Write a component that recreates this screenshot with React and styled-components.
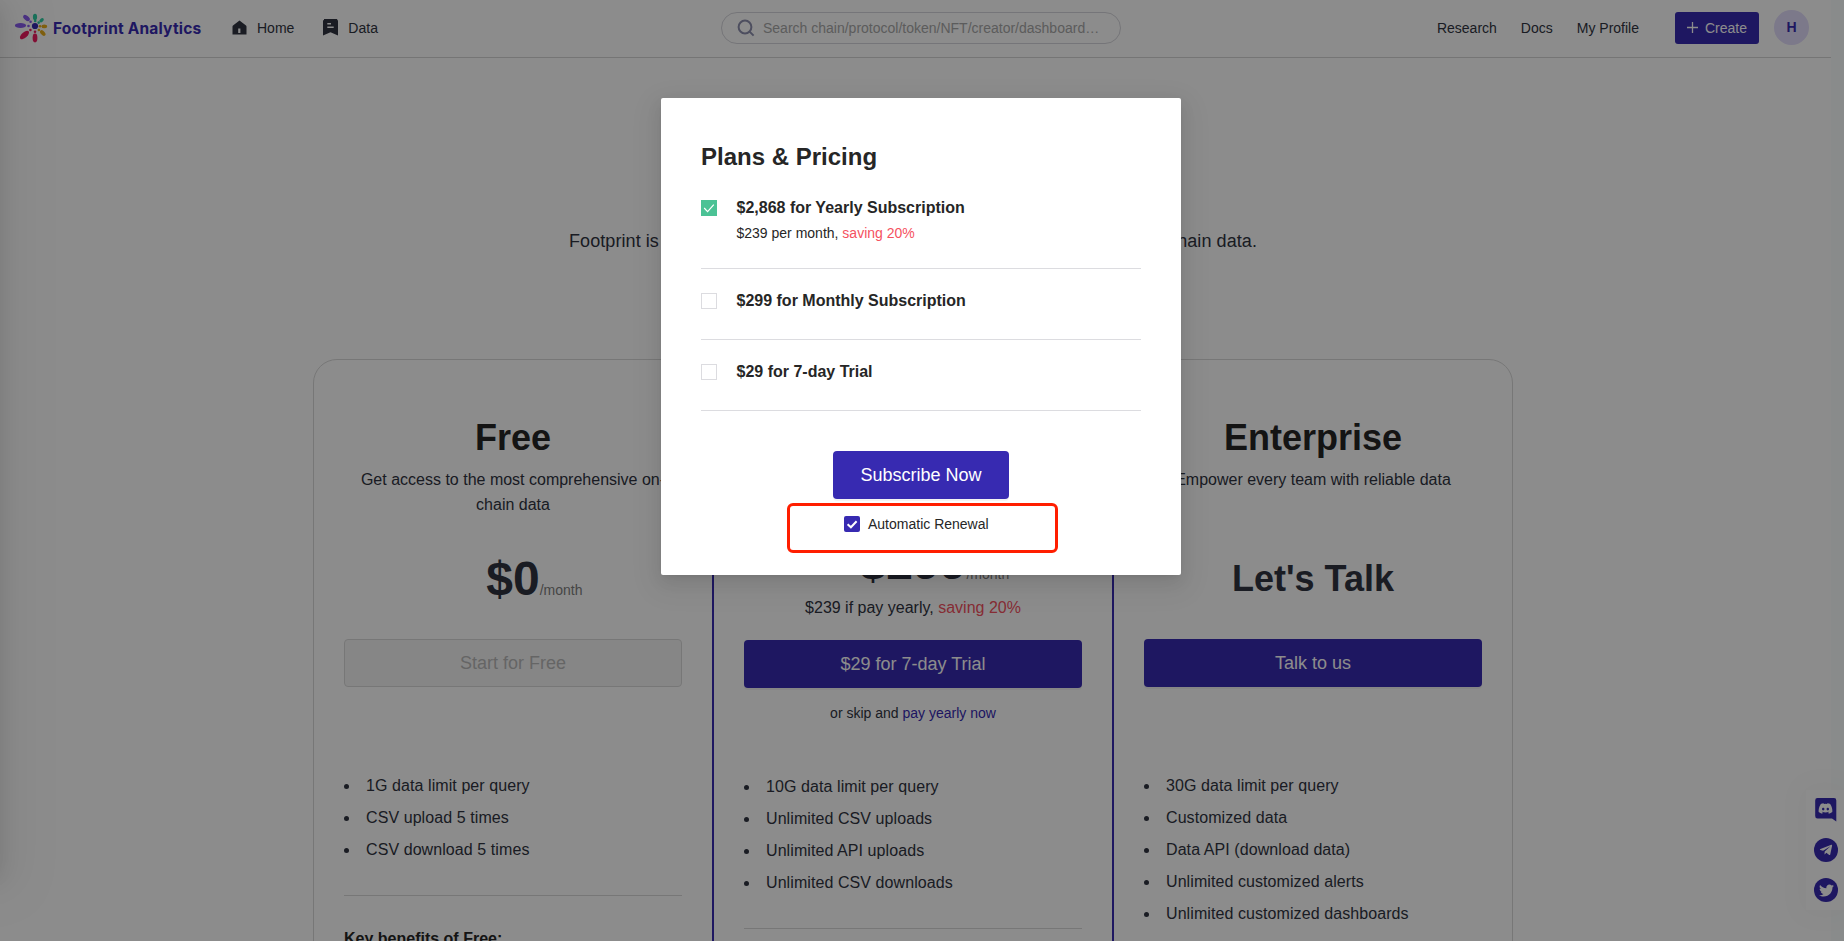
import React from "react";
import styled, { createGlobalStyle } from "styled-components";
import { FaDiscord, FaTwitter, FaTelegramPlane } from "react-icons/fa";

const PRIMARY = "#372ab1";
const INK = "#303441";

const GlobalStyle = createGlobalStyle`
  * { box-sizing: border-box; }
  body {
    margin: 0;
    background: #fff;
    color: ${INK};
    font-family: "Liberation Sans", Arial, sans-serif;
    font-size: 14px;
    overflow: hidden;
  }
  h1, h2, h3, p, ul { margin: 0; padding: 0; }
`;

const Window = styled.div`
  position: relative;
  display: flex;
  width: 1844px;
  height: 941px;
  overflow: hidden;
`;

const Page = styled.div`
  width: 1831px;
`;

const ScrollTrack = styled.div`
  flex: 1;
  background: #fafdfd;
`;

const Header = styled.header`
  display: flex;
  align-items: center;
  height: 58px;
  padding: 0 22px 2px 15px;
  border-bottom: 1px solid #d6d6d6;
`;

const Side = styled.div`
  display: flex;
  align-items: center;
  width: ${(p) => p.$width};
`;

const Brand = styled.div`
  display: flex;
  align-items: center;
  width: 217px;
  gap: 5px;
  color: ${PRIMARY};
`;

const BrandName = styled.span`
  font: 700 15.5px/20px "Inter", sans-serif;
  letter-spacing: 0.2px;
  white-space: nowrap;
  padding-top: 2px;
`;

const NavItem = styled.a`
  display: flex;
  align-items: center;
  gap: ${(p) => p.$gap || "0"};
  margin-right: ${(p) => p.$after || "24px"};
  white-space: nowrap;
`;

const SearchBox = styled.div`
  display: flex;
  align-items: center;
  gap: 8px;
  width: 400px;
  height: 32px;
  padding-left: 15px;
  border: 1px solid #d6d6dc;
  border-radius: 16px;
  color: #a8a8a8;
`;

const Spacer = styled.div`
  flex: 1;
`;

const CreateButton = styled.button`
  display: flex;
  align-items: center;
  justify-content: center;
  gap: 7px;
  width: 84px;
  height: 32px;
  padding: 0;
  margin-left: 12px;
  border: 0;
  border-radius: 3px;
  background: ${PRIMARY};
  color: #fff;
  font: inherit;
`;

const Avatar = styled.div`
  width: 35px;
  height: 35px;
  margin-left: 15px;
  border-radius: 50%;
  background: #e2dcfb;
  color: ${PRIMARY};
  font-weight: bold;
  line-height: 35px;
  text-align: center;
`;

const Main = styled.main`
  width: 1826px;
  padding-top: 169px;
`;

const Lead = styled.p`
  height: 132px;
  font-size: 18px;
  line-height: 28px;
  letter-spacing: 0.075px;
  text-align: center;
  white-space: nowrap;
`;

const Plans = styled.div`
  display: grid;
  grid-template-columns: 398px 402px 398px;
  width: 1200px;
  height: 700px;
  margin: 0 auto;
  border: 1px solid #d9d9d9;
  border-radius: 24px;
`;

const Plan = styled.section`
  padding: 56px 30px 0;
  height: 720px;
  margin-top: ${(p) => (p.$featured ? "-1px" : "0")};
  border: ${(p) => (p.$featured ? `2px solid ${PRIMARY}` : "0")};
`;

const PlanName = styled.h2`
  color: #262626;
  font-size: 36px;
  line-height: 44px;
  text-align: center;
`;

const PlanSummary = styled.p`
  height: 50px;
  margin-top: 7px;
  font-size: 16px;
  line-height: 25px;
  text-align: center;
`;

const PriceBlock = styled.div`
  height: 122px;
  padding-top: ${(p) => (p.$raised ? "14px" : "31px")};
  text-align: center;
`;

const Price = styled.div`
  height: 61px;
  font-size: ${(p) => p.$size};
  font-weight: bold;
  line-height: 61px;
`;

/* Takes no width of its own, so that the amount alone is centred. */
const Period = styled.span`
  display: inline-block;
  width: 0;
  color: #808080;
  font-size: 14px;
  font-weight: normal;
  white-space: nowrap;
`;

const YearlyNote = styled.p`
  margin-top: 3px;
  font-size: 16px;
  line-height: 24px;
`;

const Saving = styled.span`
  color: #f5515f;
`;

const Actions = styled.div`
  height: 131px;
  text-align: center;
`;

const BigButton = styled.button`
  display: block;
  width: ${(p) => p.$width || "100%"};
  height: 48px;
  border: ${(p) => (p.$muted ? "1px solid #d9d9d9" : "0")};
  border-radius: 4px;
  background: ${(p) => (p.$muted ? "#f5f5f5" : PRIMARY)};
  color: ${(p) => (p.$muted ? "#b9b9b9" : "#fff")};
  font: 18px "Liberation Sans", Arial, sans-serif;
  box-shadow: ${(p) => (p.$muted ? "none" : "0 2px 0 rgba(0, 0, 0, 0.045)")};
`;

const SkipLine = styled.p`
  margin-top: 14px;
  line-height: 22px;
`;

const Link = styled.a`
  color: ${PRIMARY};
`;

const Features = styled.ul`
  list-style: none;
`;

const Feature = styled.li`
  display: flex;
  align-items: center;
  gap: 17px;
  font-size: 16px;
  line-height: 32px;
  letter-spacing: 0.08px;

  &::before {
    content: "";
    width: 5px;
    height: 5px;
    border-radius: 50%;
    background: ${INK};
  }
`;

const Benefits = styled.h3`
  margin-top: 29px;
  padding-top: 31px;
  border-top: 1px solid #d9d9d9;
  color: #262626;
  font-size: 16px;
  line-height: 24px;
`;

const OffscreenDrawer = styled.div`
  position: absolute;
  left: -241px;
  top: 0;
  width: 240px;
  height: 884px;
  box-shadow: 6px 0 16px -8px rgba(0, 0, 0, 0.08), 9px 0 28px rgba(0, 0, 0, 0.05),
    12px 0 48px 16px rgba(0, 0, 0, 0.03);
`;

const Socials = styled.aside`
  position: absolute;
  right: 0;
  top: 790px;
  display: flex;
  flex-direction: column;
  align-items: center;
  justify-content: space-between;
  width: 38px;
  height: 120px;
  padding: 8px 0;
  padding-left: 2px;
  background: #fff;
  box-shadow: 0 0 28px 8px rgba(0, 0, 0, 0.025);
`;

const RoundIcon = styled.div`
  display: flex;
  align-items: center;
  justify-content: center;
  width: 24px;
  height: 24px;
  border-radius: 50%;
  background: ${PRIMARY};
  color: #fff;
`;

const ChatIcon = styled.div`
  position: relative;
  display: flex;
  width: 24px;
  height: 24px;
  color: #fff;

  & > svg:last-child {
    position: absolute;
    left: 4px;
    top: 3px;
  }
`;

const Mask = styled.div`
  position: absolute;
  inset: 0;
  display: flex;
  align-items: flex-start;
  padding: 98px 0 0 661px;
  background: rgba(0, 0, 0, 0.45);
`;

const Modal = styled.div`
  position: relative;
  width: 520px;
  height: 477px;
  padding: 43px 40px 0;
  border-radius: 2px;
  background: #fff;
  color: #262626;
  box-shadow: 0 3px 6px -4px rgba(0, 0, 0, 0.12), 0 6px 16px rgba(0, 0, 0, 0.08),
    0 9px 28px 8px rgba(0, 0, 0, 0.05);
`;

const ModalTitle = styled.h1`
  margin-bottom: 3px;
  font-size: 24px;
  line-height: 32px;
`;

const Option = styled.div`
  display: flex;
  gap: 19.5px;
  padding: 20px 0 ${(p) => (p.$detailed ? "24px" : "26px")};
  border-bottom: 1px solid #dcdce0;
`;

const OptionBox = styled.div`
  display: flex;
  width: 16px;
  height: 16px;
  margin-top: 4px;
  border: 1px solid ${(p) => (p.$checked ? "#4bc295" : "#dcdce0")};
  background: ${(p) => (p.$checked ? "#4bc295" : "#fff")};
`;

const OptionTitle = styled.h3`
  font-size: 16px;
  line-height: 24px;
`;

const OptionDetail = styled.p`
  padding-top: 2px;
  line-height: 22px;
`;

const Submit = styled.div`
  display: flex;
  justify-content: center;
  padding-top: 40px;
`;

const Renewal = styled.label`
  display: flex;
  align-items: center;
  gap: 8px;
  height: 22px;
  margin: 14px 0 0 143px;
`;

const RenewalBox = styled.span`
  display: flex;
  width: 16px;
  height: 16px;
  border-radius: 2px;
  background: ${PRIMARY};
`;

const Highlight = styled.div`
  position: absolute;
  left: 126px;
  top: 405px;
  width: 271px;
  height: 50px;
  border: 3px solid #ff1e00;
  border-radius: 6px;
`;

const PETALS = [
  [-14.5, -0.5, 5.6, 2.6, 0, "#8a5df0"],
  [-8.5, -8, 3.9, 2.2, 40, "#8a5df0"],
  [0, -9, 3.2, 2.1, 90, "#2fcfa4"],
  [6.6, -5.8, 2.5, 1.7, -40, "#2fcfa4"],
  [9.3, 0.4, 2.8, 1.9, 0, "#e8ae1c"],
  [7.8, 7, 3.4, 2, 48, "#e8ae1c"],
  [0, 12, 4.4, 2.4, 90, "#f01d62"],
  [-10.5, 9, 5.6, 2.8, -42, "#f01d62"],
];

const DOTS = [
  [-6.5, 0, "#8a5df0"],
  [-4.4, -4.2, "#8a5df0"],
  [0.2, -5, "#2fcfa4"],
  [3.7, -3.4, "#2fcfa4"],
  [5, 0.3, "#e8ae1c"],
  [3.9, 4, "#e8ae1c"],
  [0, 5.8, "#f01d62"],
  [-4.6, 4, "#f01d62"],
];

function Logo() {
  return (
    <svg width="33" height="30" viewBox="-20 -13 33 30">
      {PETALS.map(([x, y, rx, ry, a, c], i) => (
        <ellipse key={i} rx={rx} ry={ry} fill={c} transform={`translate(${x} ${y}) rotate(${a})`} />
      ))}
      {DOTS.map(([x, y, c], i) => (
        <circle key={i} cx={x} cy={y} r="1.3" fill={c} />
      ))}
      <circle r="3.1" fill={PRIMARY} />
    </svg>
  );
}

function HomeIcon() {
  return (
    <svg width="15" height="15" viewBox="0 0 15 15">
      <path
        fill={INK}
        fillRule="evenodd"
        d="M7.5 0.5 14 5.6Q14.5 6 14.5 6.7V14.5H.5V6.7Q.5 6 1 5.6ZM6.2 8.5V13H8.4V8.5Z"
      />
    </svg>
  );
}

function DataIcon() {
  return (
    <svg width="15" height="17" viewBox="0 0 15 17">
      <path
        fill={INK}
        fillRule="evenodd"
        d="M1 0H14.2V1.2H15V16.5L7.5 13.2 0 16.5V1.2H1ZM4.3 4V5.5H8V4ZM4.3 7.5V9H10.7V7.5Z"
      />
    </svg>
  );
}

function SearchIcon() {
  return (
    <svg width="18" height="18" viewBox="0 0 18 18" fill="none" stroke="#8d8fae" strokeWidth="2">
      <circle cx="8" cy="8" r="6.4" />
      <path d="M12.6 12.6 16.6 16.6" />
    </svg>
  );
}

function PlusIcon() {
  return (
    <svg width="11" height="11" viewBox="0 0 11 11" stroke="#fff" strokeWidth="1.3">
      <path d="M5.5 0V11M0 5.5H11" />
    </svg>
  );
}

function FeatureList({ items }) {
  return (
    <Features>
      {items.map((item) => (
        <Feature key={item}>{item}</Feature>
      ))}
    </Features>
  );
}

export default function App() {
  return (
    <Window>
      <GlobalStyle />
      <Page>
        <Header>
          <Side $width="706px">
            <Brand>
              <Logo />
              <BrandName>Footprint Analytics</BrandName>
            </Brand>
            <NavItem $gap="10px" $after="29px">
              <HomeIcon />
              Home
            </NavItem>
            <NavItem $gap="10px">
              <DataIcon />
              Data
            </NavItem>
          </Side>
          <SearchBox>
            <SearchIcon />
            Search chain/protocol/token/NFT/creator/dashboard…
          </SearchBox>
          <Spacer />
          <NavItem>Research</NavItem>
          <NavItem>Docs</NavItem>
          <NavItem>My Profile</NavItem>
          <CreateButton>
            <PlusIcon />
            Create
          </CreateButton>
          <Avatar>H</Avatar>
        </Header>
        <Main>
          <Lead>Footprint is the easiest way for anyone to discover and visualize all the on-chain data.</Lead>
          <Plans>
            <Plan>
              <PlanName>Free</PlanName>
              <PlanSummary>Get access to the most comprehensive on-chain data</PlanSummary>
              <PriceBlock>
                <Price $size="48px">
                  $0<Period>/month</Period>
                </Price>
              </PriceBlock>
              <Actions>
                <BigButton $muted>Start for Free</BigButton>
              </Actions>
              <FeatureList
                items={["1G data limit per query", "CSV upload 5 times", "CSV download 5 times"]}
              />
              <Benefits>Key benefits of Free:</Benefits>
            </Plan>
            <Plan $featured>
              <PlanName>Growth</PlanName>
              <PlanSummary>Unlock more data for your team</PlanSummary>
              <PriceBlock $raised>
                <Price $size="48px">
                  $299<Period>/month</Period>
                </Price>
                <YearlyNote>
                  $239 if pay yearly, <Saving>saving 20%</Saving>
                </YearlyNote>
              </PriceBlock>
              <Actions>
                <BigButton>$29 for 7-day Trial</BigButton>
                <SkipLine>
                  or skip and <Link>pay yearly now</Link>
                </SkipLine>
              </Actions>
              <FeatureList
                items={[
                  "10G data limit per query",
                  "Unlimited CSV uploads",
                  "Unlimited API uploads",
                  "Unlimited CSV downloads",
                ]}
              />
              <Benefits />
            </Plan>
            <Plan>
              <PlanName>Enterprise</PlanName>
              <PlanSummary>Empower every team with reliable data</PlanSummary>
              <PriceBlock>
                <Price $size="36px">Let's Talk</Price>
              </PriceBlock>
              <Actions>
                <BigButton>Talk to us</BigButton>
              </Actions>
              <FeatureList
                items={[
                  "30G data limit per query",
                  "Customized data",
                  "Data API (download data)",
                  "Unlimited customized alerts",
                  "Unlimited customized dashboards",
                ]}
              />
            </Plan>
          </Plans>
        </Main>
      </Page>
      <ScrollTrack />
      <OffscreenDrawer />
      <Socials>
        <ChatIcon>
          <svg width="24" height="24" viewBox="0 0 24 24">
            <path fill={PRIMARY} d="M3.5 0H20Q22.3 0 22.3 2.4V23.5L18 20.5H3.5Q1.2 20.5 1.2 18V2.4Q1.2 0 3.5 0Z" />
          </svg>
          <FaDiscord size={15} />
        </ChatIcon>
        <RoundIcon>
          <FaTelegramPlane size={14} />
        </RoundIcon>
        <RoundIcon>
          <FaTwitter size={15} />
        </RoundIcon>
      </Socials>
      <Mask>
        <Modal>
          <ModalTitle>Plans &amp; Pricing</ModalTitle>
          <Option $detailed>
            <OptionBox $checked>
              <svg width="14" height="14" viewBox="0 0 14 14" fill="none" stroke="#fff" strokeWidth="1.2">
                <path d="M2.2 7 5.6 10.6 11.8 3.6" />
              </svg>
            </OptionBox>
            <div>
              <OptionTitle>$2,868 for Yearly Subscription</OptionTitle>
              <OptionDetail>
                $239 per month, <Saving>saving 20%</Saving>
              </OptionDetail>
            </div>
          </Option>
          <Option>
            <OptionBox />
            <OptionTitle>$299 for Monthly Subscription</OptionTitle>
          </Option>
          <Option>
            <OptionBox />
            <OptionTitle>$29 for 7-day Trial</OptionTitle>
          </Option>
          <Submit>
            <BigButton $width="176px">Subscribe Now</BigButton>
          </Submit>
          <Renewal>
            <RenewalBox>
              <svg width="16" height="16" viewBox="0 0 16 16" fill="none" stroke="#fff" strokeWidth="2">
                <path d="M3.6 8.2 6.9 11.3 12.6 5.2" />
              </svg>
            </RenewalBox>
            Automatic Renewal
          </Renewal>
          <Highlight />
        </Modal>
      </Mask>
    </Window>
  );
}
